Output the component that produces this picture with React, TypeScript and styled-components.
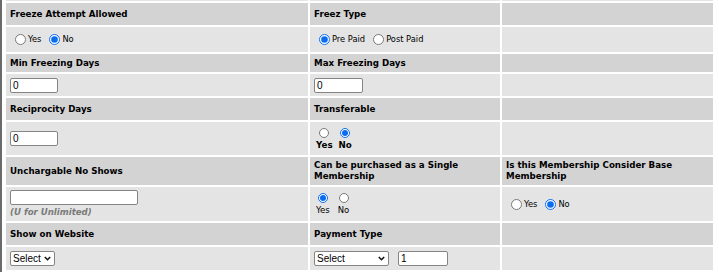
import React from "react";
import styled, { createGlobalStyle } from "styled-components";

const GlobalStyle = createGlobalStyle`
    html, body {
        margin: 0;
        padding: 0;
        background: #ffffff;
        font-family: "DejaVu Sans", Verdana, sans-serif;
        overflow: hidden;
    }
`;

const Page = styled.div`
    min-height: 100vh;
    border-left: 2px solid #6b6b6b;
    padding-left: 4px;
    background: #ffffff;
`;

const Sheet = styled.div`
    display: grid;
    grid-template-columns: 302px 190px 211px;
    grid-template-rows: 1px 22px 25px 18px 22px 22px 33px 28px 34px 22px 23px;
    gap: 2px;
`;

const HeadCell = styled.div`
    background: #d3d3d3;
    color: #000;
    font-weight: bold;
    font-size: 8.7px;
    line-height: 11px;
    padding: 0 4px;
    display: flex;
    align-items: center;
`;

const ValueCell = styled.div`
    background: #e4e4e4;
    color: #000;
    font-size: 8.3px;
    padding: 0 4px;
    display: flex;
    align-items: center;
    gap: 9px;
`;

const Stub = styled.div`
    background: #e4e4e4;
`;

const Field = styled.div`
    display: flex;
    flex-direction: column;
    gap: 2px;
`;

const TextBox = styled.input<{ $w: number }>`
    box-sizing: border-box;
    width: ${(p) => p.$w}px;
    height: 15px;
    margin: 0;
    padding: 0 2px;
    border: 1px solid #858585;
    border-radius: 2px;
    background: #fff;
    font-family: "Liberation Sans", Arial, sans-serif;
    font-size: 10px;
    color: #000;
`;

const PickerBox = styled.span<{ $w: number }>`
    box-sizing: border-box;
    width: ${(p) => p.$w}px;
    height: 15px;
    display: inline-flex;
    align-items: center;
    border: 1px solid #858585;
    border-radius: 2px;
    background: #fff;
    padding-right: 3px;

    svg {
        flex: none;
    }
`;

const Picker = styled.select`
    appearance: none;
    flex: 1;
    min-width: 0;
    height: 100%;
    margin: 0;
    padding: 0 0 0 2px;
    border: none;
    outline: none;
    background: transparent;
    font-family: "Liberation Sans", Arial, sans-serif;
    font-size: 10px;
    color: #000;
`;

const Hint = styled.span`
    color: #7a7a7a;
    font-weight: bold;
    font-style: italic;
    font-size: 8.6px;
    line-height: 11px;
`;

const Options = styled.div`
    display: flex;
    align-items: center;
    gap: 3px;
`;

const InlineOption = styled.label`
    display: flex;
    align-items: center;
    line-height: 11px;
`;

const Radio = styled.input`
    width: 11px;
    height: 11px;
    margin: 0 2px 0 5px;
    accent-color: #0b6cf0;
`;

const StackGroup = styled.div<{ $gap: number }>`
    display: flex;
    align-items: flex-start;
    gap: ${(p) => p.$gap}px;
    padding-left: 2px;
`;

const StackOption = styled.label<{ $bold?: boolean }>`
    display: flex;
    flex-direction: column;
    align-items: center;
    gap: 2px;
    line-height: 10px;
    font-weight: ${(p) => (p.$bold ? "bold" : "normal")};
    font-size: ${(p) => (p.$bold ? "8.7px" : "8.5px")};

    input {
        width: 10px;
        height: 10px;
        margin: 0;
        accent-color: #0b6cf0;
    }
`;

function Chevron() {
    return (
        <svg width="7" height="5" viewBox="0 0 7 5">
            <polyline points="0.8,0.9 3.5,3.7 6.2,0.9" fill="none" stroke="#111" strokeWidth="1.5" />
        </svg>
    );
}

function Dropdown({ width, options }: { width: number; options: string[] }) {
    return (
        <PickerBox $w={width}>
            <Picker defaultValue="">
                <option value="">Select</option>
                {options.map((o) => (
                    <option key={o} value={o}>{o}</option>
                ))}
            </Picker>
            <Chevron />
        </PickerBox>
    );
}

function InlineRadios({ name, options, checked }: { name: string; options: string[]; checked: string }) {
    return (
        <Options>
            {options.map((o) => (
                <InlineOption key={o}>
                    <Radio type="radio" name={name} defaultChecked={o === checked} />
                    {o}
                </InlineOption>
            ))}
        </Options>
    );
}

function StackRadios({ name, checked, bold, gap }: { name: string; checked: string; bold?: boolean; gap: number }) {
    return (
        <StackGroup $gap={gap}>
            {["Yes", "No"].map((o) => (
                <StackOption key={o} $bold={bold}>
                    <input type="radio" name={name} defaultChecked={o === checked} />
                    {o}
                </StackOption>
            ))}
        </StackGroup>
    );
}

export default function App() {
    return (
        <Page>
            <GlobalStyle />
            <Sheet>
                <Stub /><Stub /><Stub />

                <HeadCell>Freeze Attempt Allowed</HeadCell>
                <HeadCell>Freez Type</HeadCell>
                <HeadCell />
                <ValueCell><InlineRadios name="freezeAttempt" options={["Yes", "No"]} checked="No" /></ValueCell>
                <ValueCell><InlineRadios name="freezType" options={["Pre Paid", "Post Paid"]} checked="Pre Paid" /></ValueCell>
                <ValueCell />

                <HeadCell>Min Freezing Days</HeadCell>
                <HeadCell>Max Freezing Days</HeadCell>
                <HeadCell />
                <ValueCell><TextBox $w={48} defaultValue="0" /></ValueCell>
                <ValueCell><TextBox $w={49} defaultValue="0" /></ValueCell>
                <ValueCell />

                <HeadCell>Reciprocity Days</HeadCell>
                <HeadCell>Transferable</HeadCell>
                <HeadCell />
                <ValueCell><TextBox $w={48} defaultValue="0" /></ValueCell>
                <ValueCell><StackRadios name="transferable" checked="No" bold gap={6} /></ValueCell>
                <ValueCell />

                <HeadCell>Unchargable No Shows</HeadCell>
                <HeadCell>Can be purchased as a Single Membership</HeadCell>
                <HeadCell>Is this Membership Consider Base Membership</HeadCell>
                <ValueCell>
                    <Field>
                        <TextBox $w={128} defaultValue="" />
                        <Hint>(U for Unlimited)</Hint>
                    </Field>
                </ValueCell>
                <ValueCell><StackRadios name="single" checked="Yes" gap={8} /></ValueCell>
                <ValueCell><InlineRadios name="base" options={["Yes", "No"]} checked="No" /></ValueCell>

                <HeadCell>Show on Website</HeadCell>
                <HeadCell>Payment Type</HeadCell>
                <HeadCell />
                <ValueCell><Dropdown width={45} options={["Yes", "No"]} /></ValueCell>
                <ValueCell>
                    <Dropdown width={75} options={["Cash", "Card"]} />
                    <TextBox $w={50} defaultValue="1" />
                </ValueCell>
                <ValueCell />
            </Sheet>
        </Page>
    );
}
